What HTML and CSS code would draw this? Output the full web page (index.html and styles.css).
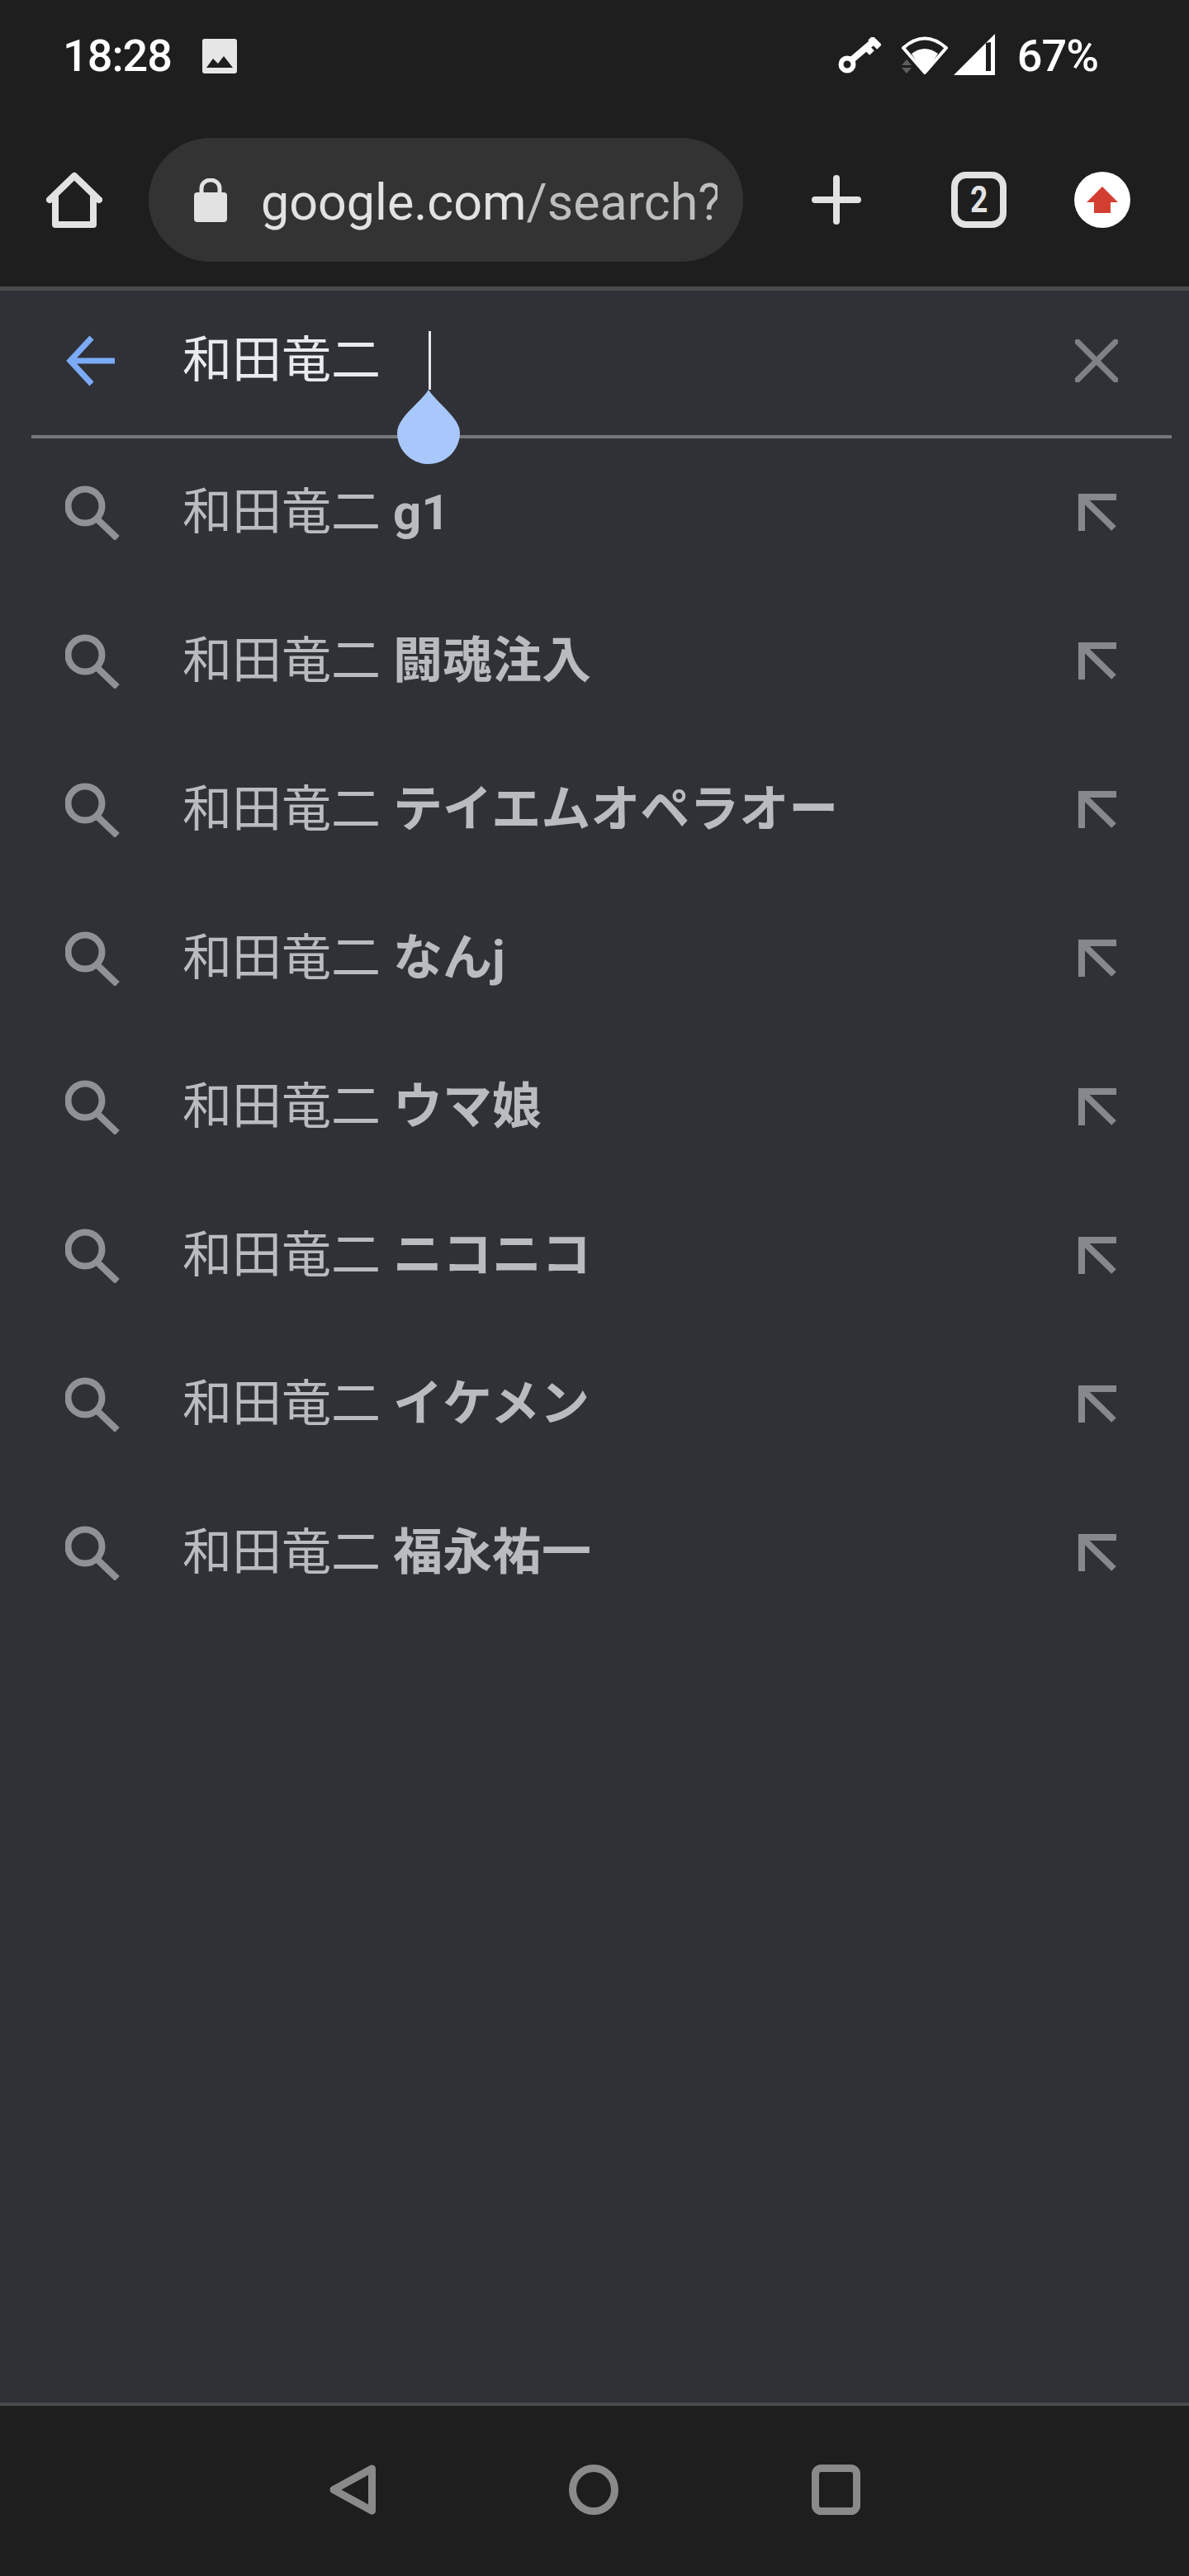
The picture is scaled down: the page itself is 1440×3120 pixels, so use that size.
FILE: index.html
```html
<!DOCTYPE html>
<html lang="ja">
<head>
    <meta charset="UTF-8">
    <meta name="viewport" content="width=device-width, initial-scale=1.0">
    <title>和田竜二 - Search</title>
    <link rel="stylesheet" href="styles.css">
</head>
<body>
    <div class="statusbar">
        <div class="status-left">
            <span class="clock">18:28</span>
            <svg class="ic-image" width="42" height="42" viewBox="0 0 42 42">
                <path fill="#e6e6e6" fill-rule="evenodd" d="M3 0H39A3 3 0 0 1 42 3V39A3 3 0 0 1 39 42H3A3 3 0 0 1 0 39V3A3 3 0 0 1 3 0ZM5 35H37L26 21L19 30L13 24Z"/>
            </svg>
        </div>
        <div class="status-right">
            <svg class="ic-key" width="52" height="46" viewBox="0 0 52 46">
                <circle cx="11" cy="33" r="7.5" fill="none" stroke="#fff" stroke-width="6"/>
                <path fill="none" stroke="#fff" stroke-width="8" d="M16 28L43 5M39 1L50 12M32 10L41 19"/>
            </svg>
            <svg class="ic-wifi" width="60" height="50" viewBox="0 0 60 50">
                <path fill="none" stroke="#fff" stroke-width="4" stroke-linejoin="round" d="M4 15Q30 -8 56 15L30 45Z"/>
                <path fill="#fff" d="M14 22Q30 10 46 22L30 47Z"/>
                <path fill="#5f5f5f" d="M8 29L14 36H2ZM2 39H14L8 46Z"/>
            </svg>
            <svg class="ic-signal" width="50" height="50" viewBox="0 0 50 50">
                <path fill="#fff" fill-rule="evenodd" d="M0 50L50 0V50ZM39 11V45H45V10Z"/>
            </svg>
            <span class="battery">67%</span>
        </div>
    </div>

    <div class="toolbar">
        <svg class="ic-home" width="68" height="68" viewBox="0 0 68 68">
            <path fill="none" stroke="#e2e2e2" stroke-width="8" stroke-linecap="round" stroke-linejoin="round" d="M4 34L34 5L64 34M11 30V64H57V30"/>
        </svg>
        <div class="urlbar">
            <svg class="ic-lock" width="40" height="53" viewBox="0 0 40 53">
                <path fill="none" stroke="#e2e2e2" stroke-width="5" d="M9 20V12A11 10 0 0 1 31 12V20"/>
                <rect y="17" width="40" height="36" rx="4" fill="#e2e2e2"/>
            </svg>
            <div class="url"><span class="host">google.com</span>/search?q</div>
        </div>
        <svg class="ic-plus" width="60" height="60" viewBox="0 0 60 60">
            <path fill="none" stroke="#e2e2e2" stroke-width="8" stroke-linecap="round" d="M30 4V56M4 30H56"/>
        </svg>
        <div class="tabs"><span>2</span></div>
        <svg class="ic-update" width="68" height="68" viewBox="0 0 68 68">
            <circle cx="34" cy="34" r="34" fill="#fff"/>
            <path fill="#d23f31" d="M34 18L53 37H44V50H24V37H15Z"/>
        </svg>
    </div>

    <div class="sheet">
        <div class="searchbox">
            <svg class="ic-back" width="60" height="62" viewBox="0 0 60 62">
                <path fill="none" stroke="#7baaf7" stroke-width="7" d="M60 31H6M32 3L6 31L32 59"/>
            </svg>
            <div class="query">和田竜二</div>
            <svg class="ic-close" width="52" height="52" viewBox="0 0 52 52">
                <path fill="none" stroke="#7e8185" stroke-width="7" stroke-linecap="square" d="M3 3L49 49M49 3L3 49"/>
            </svg>
            <div class="caret"></div>
        </div>
        <div class="underline"></div>
        <svg class="handle" width="76" height="90" viewBox="0 0 76 90">
            <path fill="#a8c7fa" d="M38 0C48 16 76 34 76 52C76 73 59 90 38 90C17 90 0 73 0 52C0 34 28 16 38 0Z"/>
        </svg>

        <ul class="suggestions">
            <li class="row">
                <svg class="ic-search" width="66" height="66"><use href="#search"/></svg>
                <span class="term">和田竜二 <b>g1</b></span>
                <svg class="ic-fill" width="46" height="46"><use href="#fill"/></svg>
            </li>
            <li class="row">
                <svg class="ic-search" width="66" height="66"><use href="#search"/></svg>
                <span class="term">和田竜二 <b>闘魂注入</b></span>
                <svg class="ic-fill" width="46" height="46"><use href="#fill"/></svg>
            </li>
            <li class="row">
                <svg class="ic-search" width="66" height="66"><use href="#search"/></svg>
                <span class="term">和田竜二 <b>テイエムオペラオー</b></span>
                <svg class="ic-fill" width="46" height="46"><use href="#fill"/></svg>
            </li>
            <li class="row">
                <svg class="ic-search" width="66" height="66"><use href="#search"/></svg>
                <span class="term">和田竜二 <b>なんj</b></span>
                <svg class="ic-fill" width="46" height="46"><use href="#fill"/></svg>
            </li>
            <li class="row">
                <svg class="ic-search" width="66" height="66"><use href="#search"/></svg>
                <span class="term">和田竜二 <b>ウマ娘</b></span>
                <svg class="ic-fill" width="46" height="46"><use href="#fill"/></svg>
            </li>
            <li class="row">
                <svg class="ic-search" width="66" height="66"><use href="#search"/></svg>
                <span class="term">和田竜二 <b>ニコニコ</b></span>
                <svg class="ic-fill" width="46" height="46"><use href="#fill"/></svg>
            </li>
            <li class="row">
                <svg class="ic-search" width="66" height="66"><use href="#search"/></svg>
                <span class="term">和田竜二 <b>イケメン</b></span>
                <svg class="ic-fill" width="46" height="46"><use href="#fill"/></svg>
            </li>
            <li class="row">
                <svg class="ic-search" width="66" height="66"><use href="#search"/></svg>
                <span class="term">和田竜二 <b>福永祐一</b></span>
                <svg class="ic-fill" width="46" height="46"><use href="#fill"/></svg>
            </li>
        </ul>
    </div>

    <div class="navbar">
        <svg width="56" height="61" viewBox="0 0 56 61">
            <path fill="none" stroke="#8a8a8a" stroke-width="9" stroke-linejoin="round" d="M51.500 5L5 30.500L51.500 56Z"/>
        </svg>
        <svg width="60" height="61" viewBox="0 0 60 61">
            <ellipse cx="30" cy="30.500" rx="25.500" ry="26" fill="none" stroke="#8a8a8a" stroke-width="9"/>
        </svg>
        <svg width="59" height="61" viewBox="0 0 59 61">
            <rect x="4.500" y="4.500" width="50" height="52" rx="7" fill="none" stroke="#8a8a8a" stroke-width="9"/>
        </svg>
    </div>

    <svg class="defs" width="0" height="0">
        <symbol id="search" viewBox="0 0 66 66">
            <circle cx="24" cy="25" r="20.500" fill="none" stroke="#8e9296" stroke-width="8"/>
            <path fill="none" stroke="#8e9296" stroke-width="8" d="M39 41L63 64"/>
        </symbol>
        <symbol id="fill" viewBox="0 0 46 46">
            <path fill="none" stroke="#85888c" stroke-width="8" d="M4 45V4H46M4 4L43 42"/>
        </symbol>
    </svg>
</body>
</html>
```

FILE: styles.css
```css
* {
    box-sizing: border-box;
}

body {
    margin: 0;
    height: 3120px;
    display: flex;
    flex-direction: column;
    background-color: #1e1e1e;
    color: #fff;
    font-family: Roboto, "Noto Sans CJK JP", sans-serif;
    overflow: hidden;
}

svg {
    display: block;
    flex-shrink: 0;
}

.defs {
    position: absolute;
}

.statusbar {
    height: 140px;
    padding: 0 110px 4px 76px;
    display: flex;
    justify-content: space-between;
    align-items: center;
}

.status-left,
.status-right {
    display: flex;
    align-items: center;
}

.clock,
.battery {
    font-size: 54px;
    font-weight: 500;
    line-height: 60px;
    letter-spacing: -1px;
}

.ic-image {
    margin-left: 37px;
}

.ic-wifi {
    margin-left: 23px;
}

.ic-signal {
    margin-left: 5px;
    margin-top: -4px;
}

.battery {
    margin-left: 27px;
}

.toolbar {
    height: 207px;
    padding: 27px 0 0 56px;
    display: flex;
    align-items: flex-start;
}

.ic-home,
.tabs,
.ic-update {
    margin-top: 41px;
}

.urlbar {
    width: 720px;
    height: 150px;
    margin-left: 56px;
    padding: 0 31px 0 55px;
    display: flex;
    align-items: center;
    background-color: #333333;
    border-radius: 75px;
}

.url {
    margin-left: 41px;
    padding-top: 6px;
    font-size: 61px;
    line-height: 76px;
    color: #bdbfbf;
    white-space: nowrap;
    overflow: hidden;
}

.host {
    color: #e2e2e2;
}

.ic-plus {
    margin: 45px 0 0 83px;
}

.tabs {
    width: 67px;
    height: 68px;
    margin-left: 109px;
    display: flex;
    align-items: center;
    justify-content: center;
    border: 8px solid #e2e2e2;
    border-radius: 18px;
    color: #e2e2e2;
    font-size: 44px;
    font-weight: 700;
}

.tabs span {
    transform: scaleX(0.85);
}

.ic-update {
    margin-left: 82px;
}

.sheet {
    flex: 1;
    position: relative;
    background-color: #303136;
    border-top: 5px solid #4a4b4c;
}

.searchbox {
    height: 175px;
    padding: 0 86px 5px 79px;
    display: flex;
    align-items: center;
}

.query {
    flex: 1;
    margin-left: 82px;
    font-size: 60px;
    line-height: 70px;
    color: #e8eaed;
}

.caret {
    position: absolute;
    left: 519px;
    top: 49px;
    width: 3px;
    height: 71px;
    background-color: #e8eaed;
}

.underline {
    height: 4px;
    margin: 0 21px 0 38px;
    background-color: #75787a;
}

.handle {
    position: absolute;
    left: 481px;
    top: 120px;
}

.suggestions {
    list-style-type: none;
    margin: 0;
    padding: 0;
}

.row {
    height: 180px;
    padding: 0 88px 0 79px;
    display: flex;
    align-items: center;
}

.term {
    flex: 1;
    margin-left: 76px;
    font-size: 60px;
    line-height: 70px;
    color: #b9bbbf;
}

.navbar {
    height: 210px;
    padding-top: 71px;
    display: flex;
    justify-content: center;
    align-items: flex-start;
    gap: 234px;
    border-top: 4px solid #4a4b4c;
}
```
